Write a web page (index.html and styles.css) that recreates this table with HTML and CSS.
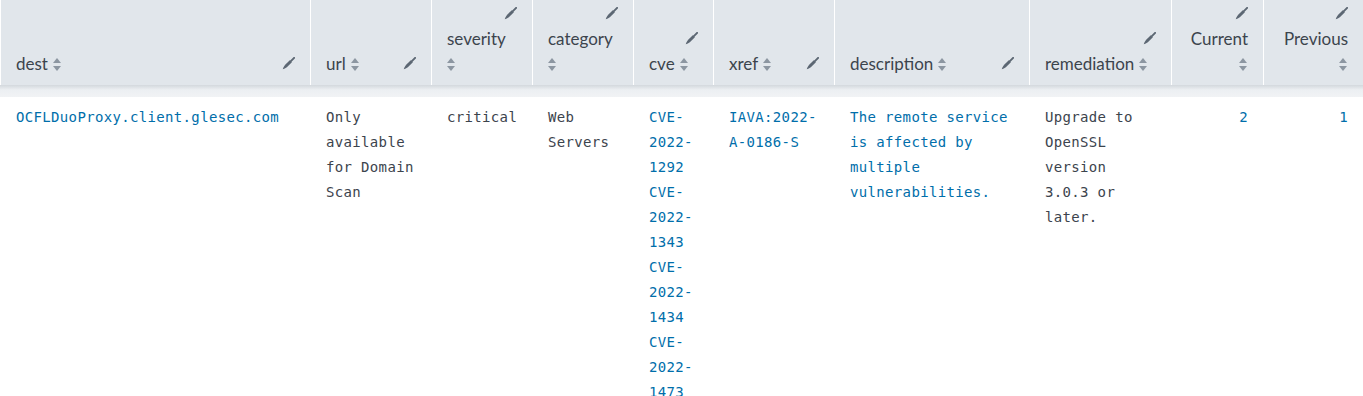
FILE: index.html
```
<!DOCTYPE html>
<html lang="en">
<head>
    <meta charset="UTF-8">
    <meta name="viewport" content="width=device-width, initial-scale=1.0">
    <title>Vulnerability Results</title>
    <link rel="stylesheet" href="styles.css">
</head>
<body>
    <div class="results-table">
        <!-- Header row -->
        <div class="table-head">
            <div class="th">
                <div class="th-line spread">
                    <span class="th-label">dest <i class="sort-icon"></i></span>
                    <svg class="edit-icon" viewBox="0 0 12 12"><path class="handle" d="M8.2 3.8 L11.2 0.8"/><path class="tip" d="M7.2 2.9 L9.1 4.8 L5.4 8.6 C4.3 9.7 2.6 10.8 0.7 11.3 C1.2 9.4 2.3 7.7 3.4 6.6 Z"/></svg>
                </div>
            </div>
            <div class="th">
                <div class="th-line spread">
                    <span class="th-label">url <i class="sort-icon"></i></span>
                    <svg class="edit-icon" viewBox="0 0 12 12"><path class="handle" d="M8.2 3.8 L11.2 0.8"/><path class="tip" d="M7.2 2.9 L9.1 4.8 L5.4 8.6 C4.3 9.7 2.6 10.8 0.7 11.3 C1.2 9.4 2.3 7.7 3.4 6.6 Z"/></svg>
                </div>
            </div>
            <div class="th">
                <div class="th-line end">
                    <svg class="edit-icon" viewBox="0 0 12 12"><path class="handle" d="M8.2 3.8 L11.2 0.8"/><path class="tip" d="M7.2 2.9 L9.1 4.8 L5.4 8.6 C4.3 9.7 2.6 10.8 0.7 11.3 C1.2 9.4 2.3 7.7 3.4 6.6 Z"/></svg>
                </div>
                <div class="th-line"><span class="th-label">severity</span></div>
                <div class="th-line"><i class="sort-icon"></i></div>
            </div>
            <div class="th">
                <div class="th-line end">
                    <svg class="edit-icon" viewBox="0 0 12 12"><path class="handle" d="M8.2 3.8 L11.2 0.8"/><path class="tip" d="M7.2 2.9 L9.1 4.8 L5.4 8.6 C4.3 9.7 2.6 10.8 0.7 11.3 C1.2 9.4 2.3 7.7 3.4 6.6 Z"/></svg>
                </div>
                <div class="th-line"><span class="th-label">category</span></div>
                <div class="th-line"><i class="sort-icon"></i></div>
            </div>
            <div class="th">
                <div class="th-line end">
                    <svg class="edit-icon" viewBox="0 0 12 12"><path class="handle" d="M8.2 3.8 L11.2 0.8"/><path class="tip" d="M7.2 2.9 L9.1 4.8 L5.4 8.6 C4.3 9.7 2.6 10.8 0.7 11.3 C1.2 9.4 2.3 7.7 3.4 6.6 Z"/></svg>
                </div>
                <div class="th-line"><span class="th-label">cve <i class="sort-icon"></i></span></div>
            </div>
            <div class="th">
                <div class="th-line spread">
                    <span class="th-label">xref <i class="sort-icon"></i></span>
                    <svg class="edit-icon" viewBox="0 0 12 12"><path class="handle" d="M8.2 3.8 L11.2 0.8"/><path class="tip" d="M7.2 2.9 L9.1 4.8 L5.4 8.6 C4.3 9.7 2.6 10.8 0.7 11.3 C1.2 9.4 2.3 7.7 3.4 6.6 Z"/></svg>
                </div>
            </div>
            <div class="th">
                <div class="th-line spread">
                    <span class="th-label">description <i class="sort-icon"></i></span>
                    <svg class="edit-icon" viewBox="0 0 12 12"><path class="handle" d="M8.2 3.8 L11.2 0.8"/><path class="tip" d="M7.2 2.9 L9.1 4.8 L5.4 8.6 C4.3 9.7 2.6 10.8 0.7 11.3 C1.2 9.4 2.3 7.7 3.4 6.6 Z"/></svg>
                </div>
            </div>
            <div class="th">
                <div class="th-line end">
                    <svg class="edit-icon" viewBox="0 0 12 12"><path class="handle" d="M8.2 3.8 L11.2 0.8"/><path class="tip" d="M7.2 2.9 L9.1 4.8 L5.4 8.6 C4.3 9.7 2.6 10.8 0.7 11.3 C1.2 9.4 2.3 7.7 3.4 6.6 Z"/></svg>
                </div>
                <div class="th-line"><span class="th-label">remediation <i class="sort-icon"></i></span></div>
            </div>
            <div class="th numeric">
                <div class="th-line end">
                    <svg class="edit-icon" viewBox="0 0 12 12"><path class="handle" d="M8.2 3.8 L11.2 0.8"/><path class="tip" d="M7.2 2.9 L9.1 4.8 L5.4 8.6 C4.3 9.7 2.6 10.8 0.7 11.3 C1.2 9.4 2.3 7.7 3.4 6.6 Z"/></svg>
                </div>
                <div class="th-line end"><span class="th-label">Current</span></div>
                <div class="th-line end"><i class="sort-icon"></i></div>
            </div>
            <div class="th numeric">
                <div class="th-line end">
                    <svg class="edit-icon" viewBox="0 0 12 12"><path class="handle" d="M8.2 3.8 L11.2 0.8"/><path class="tip" d="M7.2 2.9 L9.1 4.8 L5.4 8.6 C4.3 9.7 2.6 10.8 0.7 11.3 C1.2 9.4 2.3 7.7 3.4 6.6 Z"/></svg>
                </div>
                <div class="th-line end"><span class="th-label">Previous</span></div>
                <div class="th-line end"><i class="sort-icon"></i></div>
            </div>
        </div>

        <div class="head-shadow"></div>

        <!-- Result rows -->
        <div class="table-row">
            <div class="td link">OCFLDuoProxy.client.glesec.com</div>
            <div class="td">Only available for Domain Scan</div>
            <div class="td">critical</div>
            <div class="td">Web Servers</div>
            <div class="td link">CVE-2022-1292 CVE-2022-1343 CVE-2022-1434 CVE-2022-1473</div>
            <div class="td link">IAVA:2022-A-0186-S</div>
            <div class="td link">The remote service is affected by multiple vulnerabilities.</div>
            <div class="td">Upgrade to OpenSSL version 3.0.3 or later.</div>
            <div class="td link numeric">2</div>
            <div class="td link numeric">1</div>
        </div>
    </div>
</body>
</html>
```

FILE: styles.css
```
* {
    margin: 0;
    padding: 0;
    box-sizing: border-box;
}

body {
    font-family: 'Lato', 'Open Sans', sans-serif;
    background-color: white;
    color: #3c444d;
    overflow: hidden;
}

/* Table grid */
.table-head,
.table-row {
    display: grid;
    grid-template-columns: 310px 121px 101px 101px 80px 121px 195px 142px 92px 1fr;
}

.table-head {
    background-color: #e1e6eb;
    height: 85px;
}

.th {
    display: flex;
    flex-direction: column;
    justify-content: flex-end;
    border-left: 1px solid white;
    padding: 0 15px 9px 15px;
    font-size: 17px;
    line-height: 25px;
}

.th-line {
    display: flex;
    align-items: center;
    height: 25px;
}

.th-line.spread {
    justify-content: space-between;
}

.th-line.end {
    justify-content: flex-end;
}

.th-label {
    display: inline-flex;
    align-items: center;
    gap: 5px;
    white-space: nowrap;
    color: #3c444d;
}

.sort-icon {
    display: inline-block;
    width: 9px;
    height: 13px;
    position: relative;
    top: 1px;
}

.sort-icon::before,
.sort-icon::after {
    content: "";
    position: absolute;
    left: 0;
    border-left: 4.5px solid transparent;
    border-right: 4.5px solid transparent;
}

.sort-icon::before {
    top: 0;
    border-bottom: 5px solid #8c96a1;
}

.sort-icon::after {
    bottom: 0;
    border-top: 5px solid #8c96a1;
}

.edit-icon {
    width: 13px;
    height: 13px;
}

.edit-icon .handle {
    fill: none;
    stroke: #5c6773;
    stroke-width: 1.8;
    stroke-linecap: round;
}

.edit-icon .tip {
    fill: #5c6773;
}

.head-shadow {
    height: 12px;
    background: linear-gradient(#d3d8dd, #eceff2 40%, #f1f3f5);
}

/* Rows */
.td {
    border-left: 1px solid transparent;
    padding: 8px 14px 0 15px;
    font-family: 'DejaVu Sans Mono', 'Liberation Mono', monospace;
    font-size: 14px;
    letter-spacing: 0.34px;
    line-height: 25px;
    color: #3c444d;
    overflow-wrap: break-word;
}

.td.link {
    color: #006eaa;
}

.td.numeric {
    padding-right: 15px;
    text-align: right;
}
```
